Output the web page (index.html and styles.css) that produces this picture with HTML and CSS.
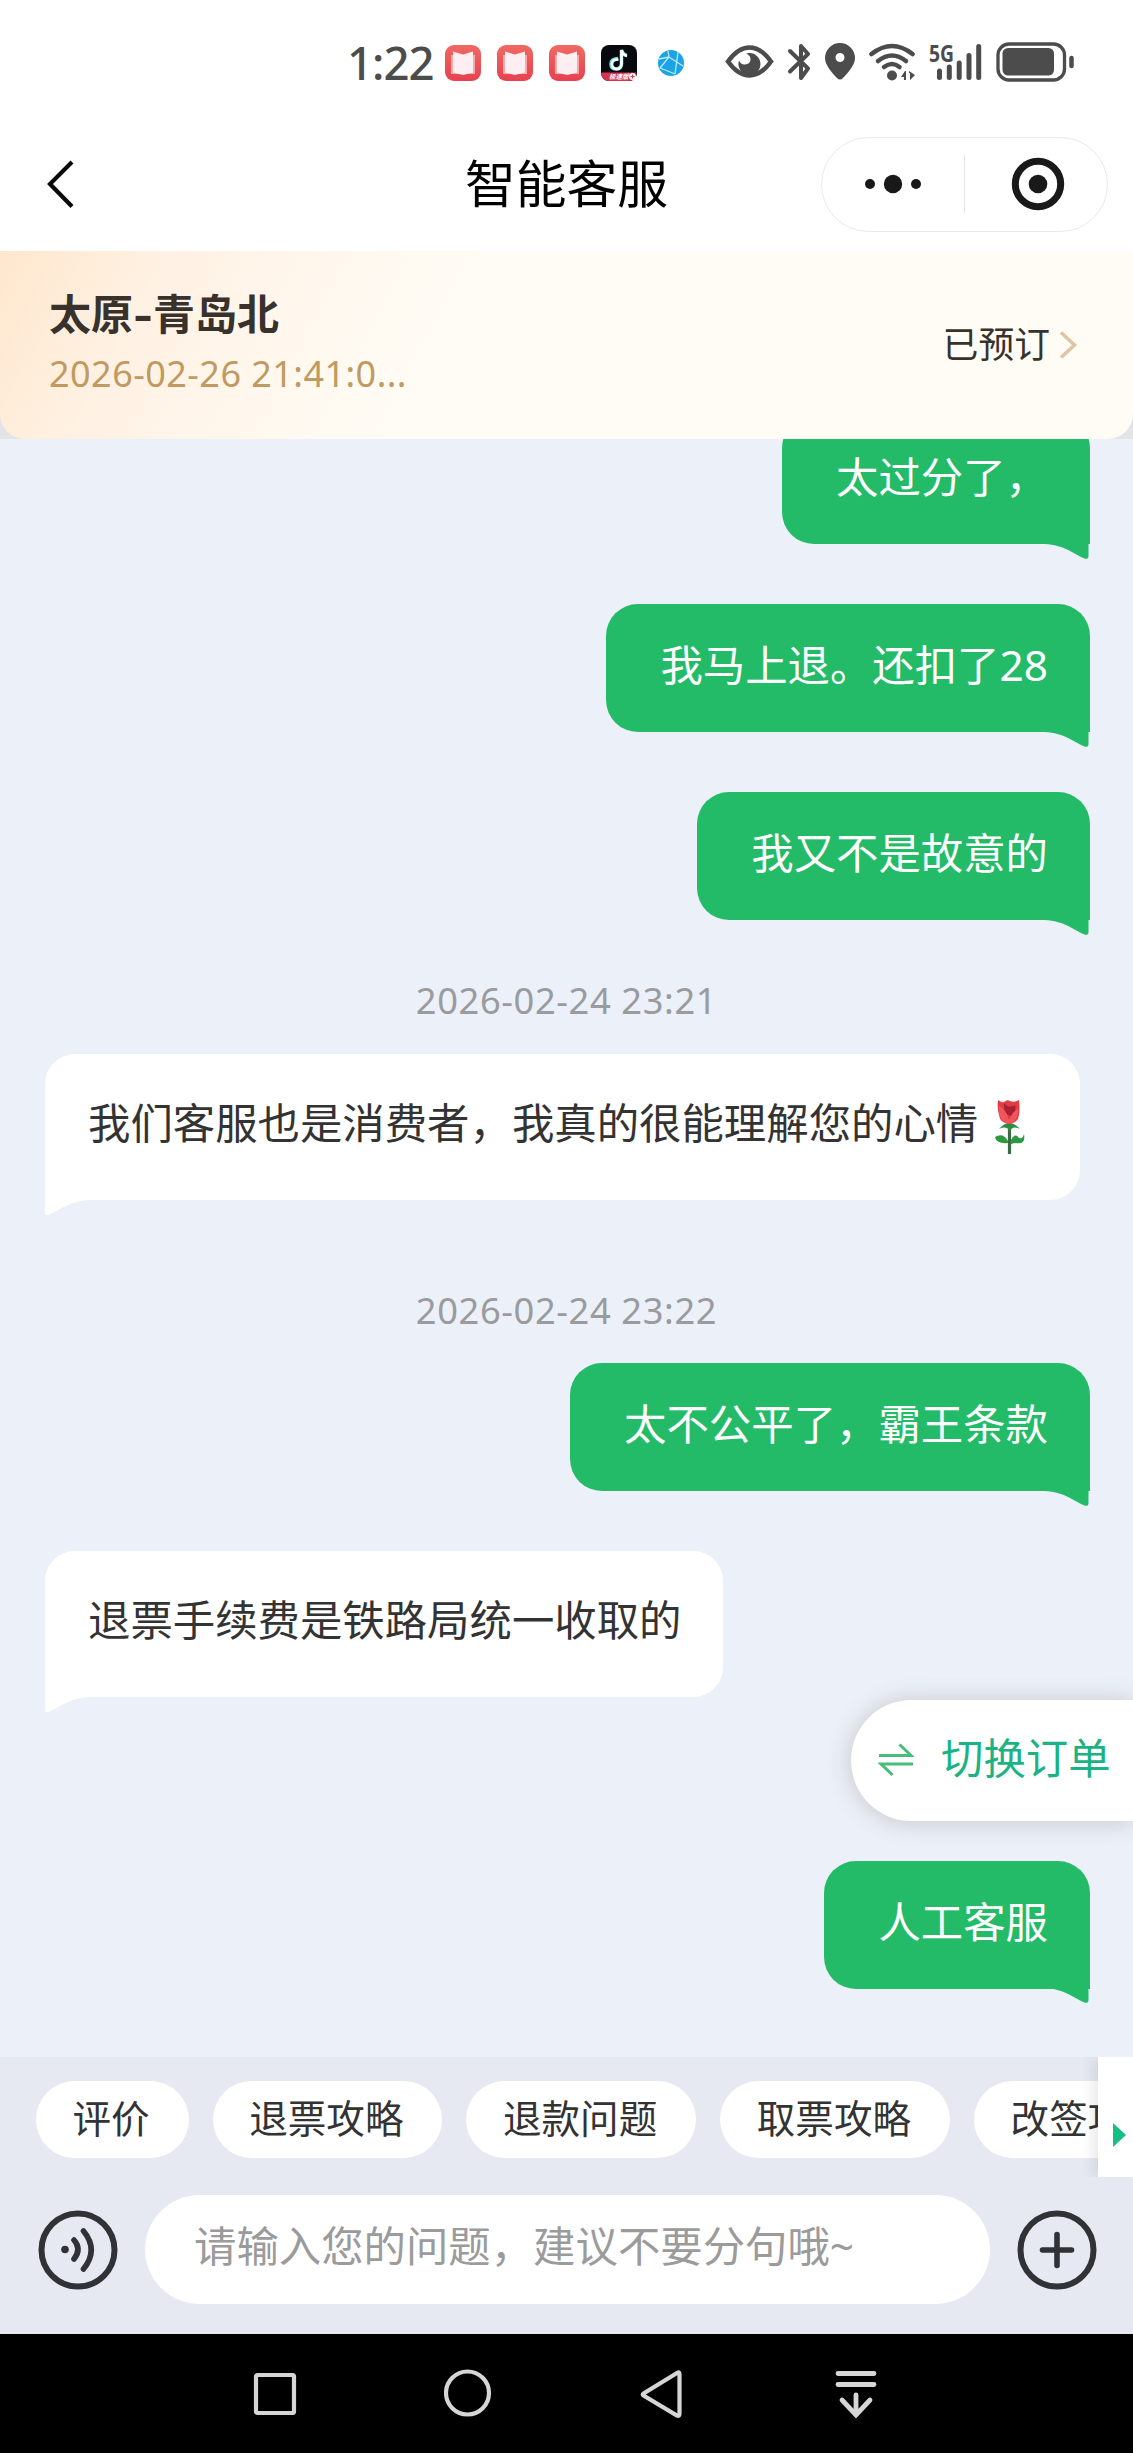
FILE: index.html
```html
<!DOCTYPE html>
<html lang="zh-CN">
<head>
<meta charset="utf-8">
<title>智能客服</title>
<link rel="stylesheet" href="styles.css">
</head>
<body>
<svg class="defs" width="0" height="0">
  <defs>
    <linearGradient id="bookRed" x1="0" y1="0" x2="0" y2="1"><stop offset="0" stop-color="#ef6a62"/><stop offset="1" stop-color="#e8404f"/></linearGradient>
    <symbol id="book" viewBox="0 0 36 36"><rect width="36" height="36" rx="9" fill="url(#bookRed)"/><path d="M6 10H30V29H6Z" fill="#f6a9ab"/><path d="M8 6.500L18 9.500L28 6.500V27.500L18 30L8 27.500Z" fill="#fdeef1"/></symbol>
    <symbol id="tail-right" viewBox="0 0 45 16"><path d="M0 0C19 1 27 9 39 14.300Q43.500 16 43.500 12V0Z"/></symbol>
    <symbol id="tail-left" viewBox="0 0 45 16"><path d="M45 0C26 1 18 8 5 14.300Q0 17 0 12V0Z"/></symbol>
  </defs>
</svg>
<div class="screen">
  <div class="status">
    <span class="clock">1:22</span>
    <svg class="app"><use href="#book"/></svg>
    <svg class="app"><use href="#book"/></svg>
    <svg class="app"><use href="#book"/></svg>
    <svg class="app" viewBox="0 0 36 36"><rect width="36" height="36" rx="8" fill="#08080f"/><path d="M1 27.500H35V28Q35 36 27 36H8Q1 36 0 28Z" fill="#d8344f"/><path d="M17 13.500Q10 14 10 19T15 24T20.500 19V5Q22 10 26 10.500" fill="none" stroke="#6fe3e6" stroke-width="3.500"/><path d="M17.500 14.500Q11 14.500 11 19T15.500 24T20.500 19V5Q22 10 26 11" fill="none" stroke="#fff" stroke-width="2.600"/><text x="8" y="34.300" class="ribbon">极速版</text><circle cx="31.500" cy="31.500" r="3.500" fill="#fff"/><path d="M29.500 31.500H33.500M31.500 29.500V33.500" stroke="#d8344f"/></svg>
    <svg class="globe" viewBox="0 0 26 26"><circle cx="13" cy="13" r="13" fill="#1ba3e6"/><path d="M2 18L11 7L25 16M10 1L11 7M1 9L11 7M20 2L17 24M2 18Q10 21 17 24" fill="none" stroke="#b9ecff" stroke-width="1.300"/></svg>
    <svg class="eye" viewBox="725 44 49 35"><path d="M728 61.500Q738 47.500 749.500 47.500T771 61.500Q761 75.500 749.500 75.500T728 61.500Z" fill="none" stroke="#4c4c4c" stroke-width="4.500"/><path d="M749 53A11 11 0 1 1 739 60.500Q741 65 745 64.500Q750 64 750.500 60Q751 55.500 746 53.500Z" fill="#4c4c4c"/></svg>
    <svg class="bt" viewBox="787 43 26 38"><path d="M790 51L808 68.500L801 78V46L808 54L790 71.500" fill="none" stroke="#4c4c4c" stroke-width="4" stroke-linecap="round" stroke-linejoin="round"/></svg>
    <svg class="pin" viewBox="825 44 30 37"><path fill-rule="evenodd" d="M840 44A15 15 0 0 1 855 59C855 66 848 74 843 79Q840 82 837 79C832 74 825 66 825 59A15 15 0 0 1 840 44ZM840 54A4.500 4.500 0 1 0 840 63A4.500 4.500 0 1 0 840 54Z" fill="#4c4c4c"/></svg>
    <svg class="wifi" viewBox="869 43 47 38"><g fill="none" stroke="#4c4c4c" stroke-width="4.500" stroke-linecap="round"><path d="M871.500 54Q892 38 912.500 54"/><path d="M878 61Q892 50 906 61"/><path d="M884 67Q892 61 899.500 67"/></g><circle cx="892" cy="75.500" r="5" fill="#4c4c4c"/><path d="M906 71V80H904V77H901L905 71ZM909 71L915 75L910 80V73H909Z" fill="#4c4c4c"/></svg>
    <svg class="signal" viewBox="929 43 54 38"><text x="929" y="62" class="five" textLength="25" lengthAdjust="spacingAndGlyphs">5G</text><path d="M939.500 71V77.500M949.300 67V77.500M959.200 63V77.500M969 55.500V77.500M978.700 46.500V77.500" stroke="#4c4c4c" stroke-width="5" stroke-linecap="round"/></svg>
    <svg class="battery" viewBox="996 42 79 40"><rect x="998" y="44" width="66.500" height="36" rx="11" fill="none" stroke="#4c4c4c" stroke-width="3.300"/><rect x="1002.500" y="48" width="51.500" height="27.500" rx="5.500" fill="#4c4c4c"/><path d="M1071.500 58V66" stroke="#4c4c4c" stroke-width="4.500" stroke-linecap="round"/></svg>
  </div>

  <header class="titlebar">
    <svg class="back" viewBox="46 157 30 52"><path d="M72 161L50 183L72 205.500" fill="none" stroke="#0a0a0a" stroke-width="4.200"/></svg>
    <h1 class="title">智能客服</h1>
    <div class="capsule">
      <svg class="more" viewBox="0 0 58 20"><circle cx="6" cy="10" r="5"/><circle cx="29" cy="10" r="9.200"/><circle cx="52" cy="10" r="5"/></svg>
      <span class="rule"></span>
      <svg class="target" viewBox="0 0 54 54"><circle cx="27" cy="27" r="22.700" fill="none" stroke="#191919" stroke-width="7"/><circle cx="27" cy="27" r="9.300"/></svg>
    </div>
  </header>

  <div class="order-wrap">
    <section class="order">
      <div class="trip">
        <div class="route">太原<span class="dash">-</span>青岛北</div>
        <div class="depart">2026-02-26 21:41:0...</div>
      </div>
      <div class="state">已预订<svg class="chev" viewBox="0 0 19 28"><path d="M2 1.500L15.500 14L2 26.500" fill="none" stroke="#dfc6a3" stroke-width="3.600"/></svg></div>
    </section>
  </div>

  <main class="chat">
    <div class="bubble mine first">太过分了，<svg class="tail"><use href="#tail-right"/></svg></div>
    <div class="bubble mine">我马上退。还扣了28<svg class="tail"><use href="#tail-right"/></svg></div>
    <div class="bubble mine">我又不是故意的<svg class="tail"><use href="#tail-right"/></svg></div>
    <time class="stamp">2026-02-24 23:21</time>
    <div class="bubble theirs">我们客服也是消费者，我真的很能理解您的心情<svg class="rose" viewBox="0 0 58 58"><path d="M31.500 28V56" stroke="#3d6a45" stroke-width="3.200"/><path d="M30 45Q18 46 17 39Q25 34 30 43ZM33 42Q37 34 41 40Q45 41 46 36Q48 47 38 45Q34 45 32 47Z" fill="#2d9a43"/><path d="M21 31Q31 19 42 31Q34 27 32 34Q29 27 21 31Z" fill="#2b8d40"/><path d="M20 2Q24 5 26 4Q29 1 32 3Q36 5 41 2Q42 10 41 17Q40 25 31 26Q22 25 21 17Q19 10 20 2Z" fill="#e23c43"/><path d="M26 5Q30 11 37 7Q39 14 34 18Q25 18 26 5Z" fill="#ab2030"/><path d="M21 8Q28 11 31 22Q35 13 40 11Q41 24 31 26Q20 24 21 8Z" fill="#ef555a"/></svg><svg class="tail"><use href="#tail-left"/></svg></div>
    <time class="stamp later">2026-02-24 23:22</time>
    <div class="bubble mine">太不公平了，霸王条款<svg class="tail"><use href="#tail-right"/></svg></div>
    <div class="bubble theirs">退票手续费是铁路局统一收取的<svg class="tail"><use href="#tail-left"/></svg></div>
    <div class="bubble mine last">人工客服<svg class="tail"><use href="#tail-right"/></svg></div>
    <button class="switch"><svg class="swap" viewBox="0 0 36 34"><path d="M1 12.500H33L21.500 1.500M35 21H3L14.500 32" fill="none" stroke="#46bd79" stroke-width="3"/></svg>切换订单</button>
  </main>

  <footer class="composer">
    <div class="chips">
      <span class="chip">评价</span><span class="chip">退票攻略</span><span class="chip">退款问题</span><span class="chip">取票攻略</span><span class="chip">改签攻略</span>
    </div>
    <div class="more-chips"><svg class="play" viewBox="0 0 13 24"><path d="M0 0L13 12L0 24Z" fill="#16be83"/></svg></div>
    <div class="entry">
      <svg class="round" viewBox="0 0 80 80"><circle cx="40" cy="40" r="36.500" fill="none" stroke="#303236" stroke-width="6"/><circle cx="27" cy="39.500" r="3.800" fill="#303236"/><path d="M36 30Q44 39 36 49M45.500 21Q61 40 45.500 59" fill="none" stroke="#303236" stroke-width="5.600" stroke-linecap="round"/></svg>
      <div class="field">请输入您的问题，建议不要分句哦~</div>
      <svg class="round" viewBox="0 0 80 80"><circle cx="40" cy="40" r="36.500" fill="none" stroke="#303236" stroke-width="6"/><path d="M25.500 40H54.500M40 24.500V55.500" stroke="#303236" stroke-width="5.600" stroke-linecap="round"/></svg>
    </div>
  </footer>

  <nav class="nav">
    <svg class="key" viewBox="0 0 50 50"><rect x="6" y="6" width="38" height="38" rx="1.500"/></svg>
    <svg class="key" viewBox="0 0 50 50"><circle cx="23.500" cy="24" r="21.500"/></svg>
    <svg class="key" viewBox="0 0 50 50"><path d="M6.500 24.500Q5 25.500 6.500 26.500L40 46.500Q42.500 47.500 42.500 45V5Q42.500 2.500 40 4Z"/></svg>
    <svg class="key" viewBox="0 0 50 50"><path d="M7 4.500H43M7 15.500H43M25 26V46M11 31L25 46L39 31" stroke-width="4.800" stroke-linecap="round"/></svg>
  </nav>
</div>
</body>
</html>
```
FILE: styles.css
```css
* { box-sizing: border-box; }
body {
  margin: 0;
  font-family: "Noto Sans", "Noto Sans CJK SC", sans-serif;
  background: #fff;
}
svg { display: block; flex: none; }
.defs { position: absolute; }
.screen {
  width: 1133px;
  height: 2453px;
  display: flex;
  flex-direction: column;
  overflow: hidden;
}

.status {
  height: 126px;
  padding: 0 0 3px 347px;
  display: flex;
  align-items: center;
  flex: none;
}
.clock {
  width: 98px;
  font-size: 45.500px;
  line-height: 60px;
  letter-spacing: -1px;
  font-weight: 500;
  color: #4c4c4c;
  white-space: nowrap;
}
.app { width: 36px; height: 36px; margin-right: 16px; margin-top: 3px; }
.ribbon { font-size: 6.500px; font-style: italic; font-weight: 700; fill: #fff; }
.globe { width: 26px; height: 26px; margin: 3px 0 0 5px; }
.eye { width: 49px; height: 35px; margin-left: 41px; }
.bt { width: 26px; height: 38px; margin-left: 13px; }
.pin { width: 30px; height: 37px; margin-left: 12px; }
.wifi { width: 47px; height: 38px; margin-left: 14px; }
.signal { width: 54px; height: 38px; margin-left: 13px; overflow: visible; }
.five { font: 700 23px "Noto Sans", sans-serif; fill: #4c4c4c; }
.battery { width: 79px; height: 40px; margin-left: 13px; }

.titlebar {
  height: 125px;
  padding: 0 25px 9px 46px;
  flex: none;
  display: grid;
  grid-template-columns: 287px 1fr 287px;
  align-items: center;
}
.back { width: 30px; height: 52px; }
.title {
  margin: 0;
  padding-right: 21px;
  text-align: center;
  font-size: 50.800px;
  line-height: 60px;
  font-weight: 400;
  color: #000;
}
.capsule {
  width: 287px;
  height: 95px;
  border: 1.500px solid #e9e9e9;
  border-radius: 48px;
  display: flex;
  align-items: center;
  fill: #191919;
}
.more { width: 58px; height: 20px; margin-left: 42px; }
.rule { width: 1px; height: 58px; margin-left: 42px; background: #e4e4e4; }
.target { width: 54px; height: 54px; margin-left: 46px; }

.order-wrap { background: #e3e4e7; flex: none; }
.order {
  height: 188px;
  padding: 0 55px 0 49px;
  display: flex;
  justify-content: space-between;
  border-radius: 0 0 25px 25px;
  background: linear-gradient(118deg, #fee7cd 0, #fff1e3 150px, #fff9f0 330px, #fffcf5 440px);
}
.trip { padding-top: 35px; }
.route {
  font-size: 42px;
  line-height: 56px;
  font-weight: 700;
  color: #38312c;
}
.dash { display: inline-block; width: 20px; text-align: center; transform: scaleX(1.35); }
.depart {
  margin-top: 7px;
  font-size: 36px;
  line-height: 50px;
  letter-spacing: 0.450px;
  color: #c09a60;
  white-space: nowrap;
}
.state {
  display: flex;
  align-items: center;
  padding-bottom: 3px;
  font-size: 35.800px;
  line-height: 50px;
  color: #38322d;
}
.chev { width: 19px; height: 28px; margin-left: 9px; margin-top: 3px; }

.chat {
  position: relative;
  height: 1618px;
  flex: none;
  display: flex;
  flex-direction: column;
  align-items: flex-start;
  overflow: hidden;
  background: #ecf0f8;
}
.bubble {
  position: relative;
  flex: none;
  display: flex;
  align-items: center;
  font-size: 42.400px;
  line-height: 60px;
  white-space: nowrap;
}
.mine {
  align-self: flex-end;
  height: 128px;
  margin: 0 43px 60px 0;
  padding: 0 42px 6px 54px;
  border-radius: 32px 32px 0 32px;
  background: #24bb68;
  color: #fff;
}
.first { margin-top: -23px; }
.theirs {
  height: 146px;
  margin-left: 45px;
  padding: 0 42px 9px 43px;
  border-radius: 30px 30px 30px 0;
  background: #fff;
  color: #333;
}
.tail { position: absolute; top: calc(100% - 0.500px); width: 45px; height: 16px; }
.mine .tail { right: 0; fill: #24bb68; }
.theirs .tail { left: 0; fill: #fff; }
.rose { width: 58px; height: 58px; margin: 8px 2px 0 0; }
.stamp {
  align-self: center;
  margin: -6px 0 27px;
  font-size: 36.300px;
  line-height: 53px;
  letter-spacing: 0.600px;
  color: #999b9e;
}
.stamp.later { margin: 84px 0 26px; }
.last { margin: 163.500px 43px 0 0; }
.switch {
  position: absolute;
  right: 0;
  top: 1261px;
  width: 282px;
  height: 121px;
  padding: 0 0 6px 27px;
  border: 0;
  border-radius: 61px 0 0 61px;
  display: flex;
  align-items: center;
  gap: 27px;
  background: #fff;
  box-shadow: 0 1px 24px rgba(70, 70, 55, 0.24);
  font: 42.400px/60px "Noto Sans", "Noto Sans CJK SC", sans-serif;
  color: #1bb384;
  white-space: nowrap;
}
.swap { width: 36px; height: 34px; margin-top: 4px; }

.composer {
  position: relative;
  height: 277px;
  flex: none;
  padding-top: 24px;
  background: #e6e9f1;
}
.chips { display: flex; gap: 24px; padding-left: 36px; overflow: hidden; }
.chip {
  flex: none;
  height: 77px;
  padding: 0 39px 0 36.500px;
  border-radius: 39px;
  background: #fff;
  font-size: 38.600px;
  line-height: 74px;
  color: #333;
}
.more-chips {
  position: absolute;
  right: 0;
  top: 0;
  width: 35px;
  height: 120px;
  padding: 66px 0 0 15px;
  background: #fff;
  box-shadow: -4px 0 14px rgba(60, 65, 60, 0.13);
  clip-path: inset(0 0 0 -30px);
}
.play { width: 13px; height: 24px; }
.entry {
  margin-top: 37px;
  padding: 0 36px 0 38px;
  display: flex;
  align-items: center;
  justify-content: space-between;
}
.round { width: 80px; height: 80px; }
.field {
  width: 845px;
  height: 109px;
  padding: 0 49px;
  border-radius: 55px;
  background: #fff;
  font-size: 42.400px;
  line-height: 102px;
  color: #9b9b9b;
  white-space: nowrap;
}

.nav {
  height: 119px;
  flex: none;
  display: flex;
  gap: 143.500px;
  padding: 35px 0 0 250px;
  background: #000;
}
.key { width: 50px; height: 50px; fill: none; stroke: #d6d6d6; stroke-width: 4.200px; }
```
